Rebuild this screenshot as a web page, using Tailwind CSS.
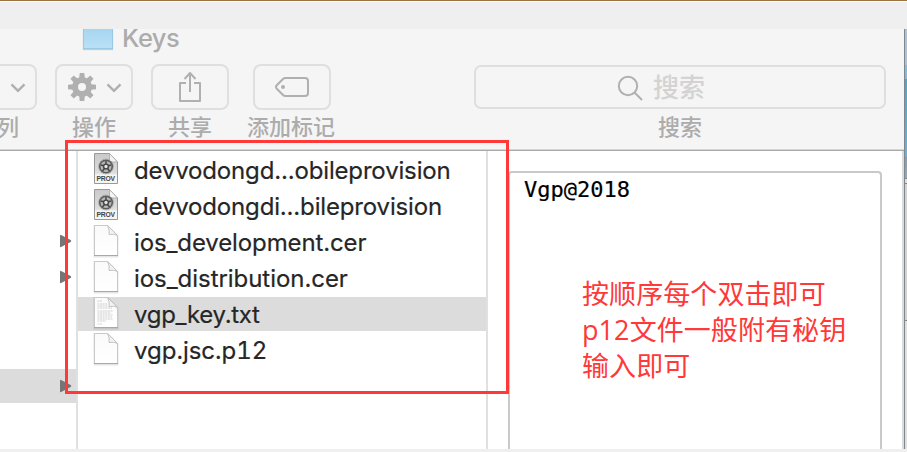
<!DOCTYPE html>
<html lang="zh-CN">
<head>
<meta charset="utf-8">
<title>Keys</title>
<script src="https://cdn.jsdelivr.net/npm/@tailwindcss/browser@4"></script>
</head>
<body class="relative w-[907px] h-[452px] overflow-hidden bg-[#efefef] font-['Inter','Noto_Sans_CJK_SC',sans-serif]">
<svg class="absolute h-0 w-0">
  <defs>
    <linearGradient id="prov" x1="0" y1="0" x2="0" y2="1"><stop offset="0" stop-color="#c9c9c9"/><stop offset=".65" stop-color="#dedede"/><stop offset=".72" stop-color="#f5f5f5"/></linearGradient>
    <linearGradient id="paper" x1="0" y1="0" x2="0" y2="1"><stop offset="0" stop-color="#fafafa"/><stop offset="1" stop-color="#fff"/></linearGradient>
    <symbol id="page" viewBox="0 0 26 34">
      <path d="M1.500 2H14.500L24.500 12V32.500H1.500Z" fill="none" stroke="#000" stroke-opacity=".1" stroke-width="2"/>
      <path d="M1.500 1.500H14.500L24.500 11.500V31.500H1.500Z" fill="url(#paper)" stroke="#c9c9c9"/>
      <path d="M1 31.500H25" stroke="#a9a9a9"/>
      <path d="M14.500 1.500Q17 6 16 10.500Q21 9.500 24.500 11.500Z" fill="#f3f3f3" stroke="#c4c4c4"/>
    </symbol>
    <symbol id="profile" viewBox="0 0 26 34">
      <path d="M1.500 1.500H16.500L24.500 10V31.500H1.500Z" fill="url(#prov)" stroke="#999"/>
      <path d="M16.500 1.500V10H24.500Z" fill="#f4f4f4" stroke="#aaa" stroke-width=".8"/>
      <circle cx="13" cy="14.500" r="6.300" fill="#b5b5b5" stroke="#5c5c5c" stroke-width="1.600"/>
      <circle cx="13" cy="14.500" r="7.400" fill="none" stroke="#777" stroke-width=".8" stroke-dasharray="1 1"/>
      <path d="M13 9V14.500L18 13M13 14.500L16.500 19M13 14.500L9.500 19M13 14.500L8 13" stroke="#444" stroke-width="1.400" fill="none"/>
      <circle cx="13" cy="14.500" r="2.400" fill="#e5e5e5" stroke="#444" stroke-width="1.400"/>
      <text x="3.500" y="29.300" font-family="Liberation Sans, sans-serif" font-weight="700" font-size="6.800" textLength="18.500" fill="#444">PROV</text>
    </symbol>
    <symbol id="arrow" viewBox="0 0 13 14"><path d="M0 .8Q0 0 1.200 .4L11.500 6Q13 7 11.500 8L1.200 13.600Q0 14 0 13.200Z" fill="#757575"/></symbol>
    <symbol id="chev" viewBox="0 0 16 10"><path d="M1.500 1.300L8 7.800L14.500 1.300" fill="none" stroke="#b0b0b0" stroke-width="2.500"/></symbol>
  </defs>
</svg>

<div class="flex h-[452px] flex-col">
  <div class="h-[29px] shrink-0 border-t border-[#9c7443]"><div class="h-px bg-white"></div></div>
  <div class="flex h-[420px] shrink-0">
    <main class="flex w-[904px] flex-col">
      <header class="h-[122px] shrink-0 overflow-hidden border-b border-[#a8a8a8] bg-[#f5f5f5]">
        <div class="flex h-[121px] flex-col border-b border-[#d6d6d6]">
          <div class="flex h-[35px] shrink-0 pl-[83px]">
            <div class="h-[20px] w-[30px] border border-t-0 border-[#9bc9e3] bg-linear-to-b from-[#a7d6f1] to-[#b9e0f6] shadow-[0_1px_1px_#ccc]"></div>
            <h1 class="ml-[9px] -mt-[6px] h-[30px] text-[25.5px] leading-[30px] font-medium tracking-[-0.6px] text-[#acacac]">Keys</h1>
          </div>
          <div class="flex text-[22px] leading-[30px] font-medium whitespace-nowrap text-[#acacac]">
            <div class="flex w-[37px] flex-col">
              <div class="flex h-[46px] items-center justify-end rounded-r-[8px] border-2 border-l-0 border-[#dfdfdf] pr-[9px]"><svg class="mt-[2px] h-[10px] w-[16px]"><use href="#chev"/></svg></div>
              <span class="mt-[2px] -ml-[3px]">列</span>
            </div>
            <div class="ml-[18px] flex w-[78px] flex-col items-center">
              <div class="flex h-[46px] w-full items-center rounded-[8px] border-2 border-[#dfdfdf] pl-[11px]">
                <svg class="h-[28px] w-[28px]" viewBox="-14 -14 28 28" fill="#b0b0b0">
                  <path fill-rule="evenodd" d="M-10 0a10 10 0 1 0 20 0a10 10 0 1 0-20 0M-4 0a4 4 0 1 1 8 0a4 4 0 1 1-8 0"/>
                  <g id="teeth"><path id="tooth" d="M-2.800 -9L-2.300 -14H2.300L2.800 -9Z"/><use href="#tooth" transform="rotate(45)"/><use href="#tooth" transform="rotate(90)"/><use href="#tooth" transform="rotate(135)"/></g>
                  <use href="#teeth" transform="rotate(180)"/>
                </svg>
                <svg class="mt-[2px] ml-[10px] h-[10px] w-[16px]"><use href="#chev"/></svg>
              </div>
              <span class="mt-[2px]">操作</span>
            </div>
            <div class="ml-[18px] flex w-[78px] flex-col items-center">
              <div class="flex h-[46px] w-full items-center justify-center rounded-[8px] border-2 border-[#dfdfdf]">
                <svg class="-mt-[2px] h-[31px] w-[24px]" viewBox="0 0 24 31" fill="none" stroke="#b0b0b0" stroke-width="2"><path d="M8 12H2V30H22V12H16M12 21V2M6.500 8L12 2L17.500 8" stroke-linejoin="round"/></svg>
              </div>
              <span class="mt-[2px]">共享</span>
            </div>
            <div class="ml-[16px] flex w-[92px] flex-col items-center">
              <div class="ml-[2px] flex h-[46px] w-[78px] items-center justify-center rounded-[8px] border-2 border-[#dfdfdf]">
                <svg class="h-[20px] w-[34px]" viewBox="0 0 34 20" fill="none" stroke="#b0b0b0" stroke-width="2"><path d="M10.500 1H30Q33 1 33 4V16Q33 19 30 19H10.500Q9 19 8 18L2 12Q0 10 2 8L8 2Q9 1 10.500 1Z"/><circle cx="8" cy="10" r="2" fill="#b0b0b0" stroke="none"/></svg>
              </div>
              <span class="mt-[2px]">添加标记</span>
            </div>
            <div class="ml-[137px] flex w-[412px] flex-col items-center pt-px">
              <div class="flex h-[44px] w-full items-center rounded-[7px] border-2 border-[#dfdfdf] pl-[141px] text-[26px] text-[#d3d3d3]">
                <svg class="mt-[2px] h-[26px] w-[26px]" viewBox="0 0 26 26" fill="none" stroke="#b0b0b0" stroke-width="2"><circle cx="11" cy="11" r="9.200"/><path d="M17.500 17.500L25 25"/></svg>
                <span class="mt-[2px] ml-[10px]">搜索</span>
              </div>
              <span class="mt-[3px]">搜索</span>
            </div>
          </div>
        </div>
      </header>
      <div class="flex h-[298px] border-r-2 border-[#dcdcdc] bg-white">
        <div class="flex w-[78px] flex-col border-r-2 border-[#e0e0e0]">
          <div class="mt-[72px] flex h-[36px] items-center justify-end pr-[4px]"><svg class="h-[14px] w-[12px]"><use href="#arrow"/></svg></div>
          <div class="flex h-[36px] items-center justify-end pr-[4px]"><svg class="h-[14px] w-[12px]"><use href="#arrow"/></svg></div>
          <div class="mt-[74px] flex h-[34px] items-center justify-end bg-[#dcdcdc] pr-[4px]"><svg class="h-[14px] w-[12px]"><use href="#arrow"/></svg></div>
        </div>
        <ul class="flex w-[410px] flex-col gap-[2px] border-r-2 border-[#e0e0e0] pt-[2px] text-[24px] leading-[36px] whitespace-nowrap text-[#262626] [-webkit-text-stroke:0.2px_#262626]">
          <li class="flex h-[34px] pl-[15px]"><svg class="-mt-px h-[34px] w-[26px] [-webkit-text-stroke:0]"><use href="#profile"/></svg><span class="ml-[15px] tracking-[-0.16px]">devvodongd...obileprovision</span></li>
          <li class="flex h-[34px] pl-[15px]"><svg class="-mt-px h-[34px] w-[26px] [-webkit-text-stroke:0]"><use href="#profile"/></svg><span class="ml-[15px] tracking-[-0.16px]">devvodongdi...bileprovision</span></li>
          <li class="flex h-[34px] pl-[15px]"><svg class="-mt-px h-[34px] w-[26px]"><use href="#page"/></svg><span class="ml-[15px] tracking-[-0.12px]">ios_development.cer</span></li>
          <li class="flex h-[34px] pl-[15px]"><svg class="-mt-px h-[34px] w-[26px]"><use href="#page"/></svg><span class="ml-[15px] tracking-[-0.05px]">ios_distribution.cer</span></li>
          <li class="flex h-[34px] bg-[#dcdcdc] pl-[15px]"><svg class="-mt-px h-[34px] w-[26px]"><use href="#page"/><path d="M4.500 5H9M4.500 8H14M4.500 10H15M4.500 12H19M4.500 15H20M4.500 17H18M4.500 19H20M4.500 21H19M4.500 23H20M4.500 25H13M4.500 28H9" stroke="#bbb" stroke-width=".7" stroke-dasharray="2 .6"/></svg><span class="ml-[15px] tracking-[-0.3px]">vgp_key.txt</span></li>
          <li class="flex h-[34px] pl-[15px]"><svg class="-mt-px h-[34px] w-[26px]"><use href="#page"/></svg><span class="ml-[15px] tabular-nums">vgp.jsc.p12</span></li>
        </ul>
        <section class="flex flex-1 pt-[20px] pl-[20px]">
          <div class="h-[278px] w-[374px] rounded-t-[4px] border-2 border-b-0 border-[#c9c9c9] pl-[14px]">
            <p class="mt-[4px] font-['DejaVu_Sans_Mono',monospace] text-[22px] leading-[26px] text-black [-webkit-text-stroke:0.2px_#000]">Vgp@2018</p>
            <p class="mt-[73px] ml-[58px] font-['Open_Sans','Noto_Sans_CJK_SC',sans-serif] text-[27px] leading-[36px] tracking-[0.08px] whitespace-nowrap text-[#ff3838]">按顺序每个双击即可<br>p12文件一般附有秘钥<br>输入即可</p>
          </div>
        </section>
      </div>
    </main>
    <aside class="flex w-[3px] flex-col border-l border-[#7d8790]">
      <div class="h-[36px] bg-[#b3bfd3]"></div>
      <div class="h-[14px] bg-[#83bddb]"></div>
      <div class="h-[78px] bg-linear-to-b from-[#58a0c8] to-[#6fb0d3]"></div>
      <div class="h-[21px] bg-linear-to-b from-[#8a9ba8] to-[#9aa6b4]"></div>
      <div class="h-[6px] border-y border-[#888] bg-[#ddd]"></div>
      <div class="h-[136px] bg-[#d2d2d2]"></div>
      <div class="flex-1 border-t border-[#888] bg-[#dedede]"></div>
    </aside>
  </div>
</div>
<div class="pointer-events-none absolute top-[140px] left-[65px] h-[254px] w-[444px] border-3 border-[#ff3838]"></div>
</body>
</html>
